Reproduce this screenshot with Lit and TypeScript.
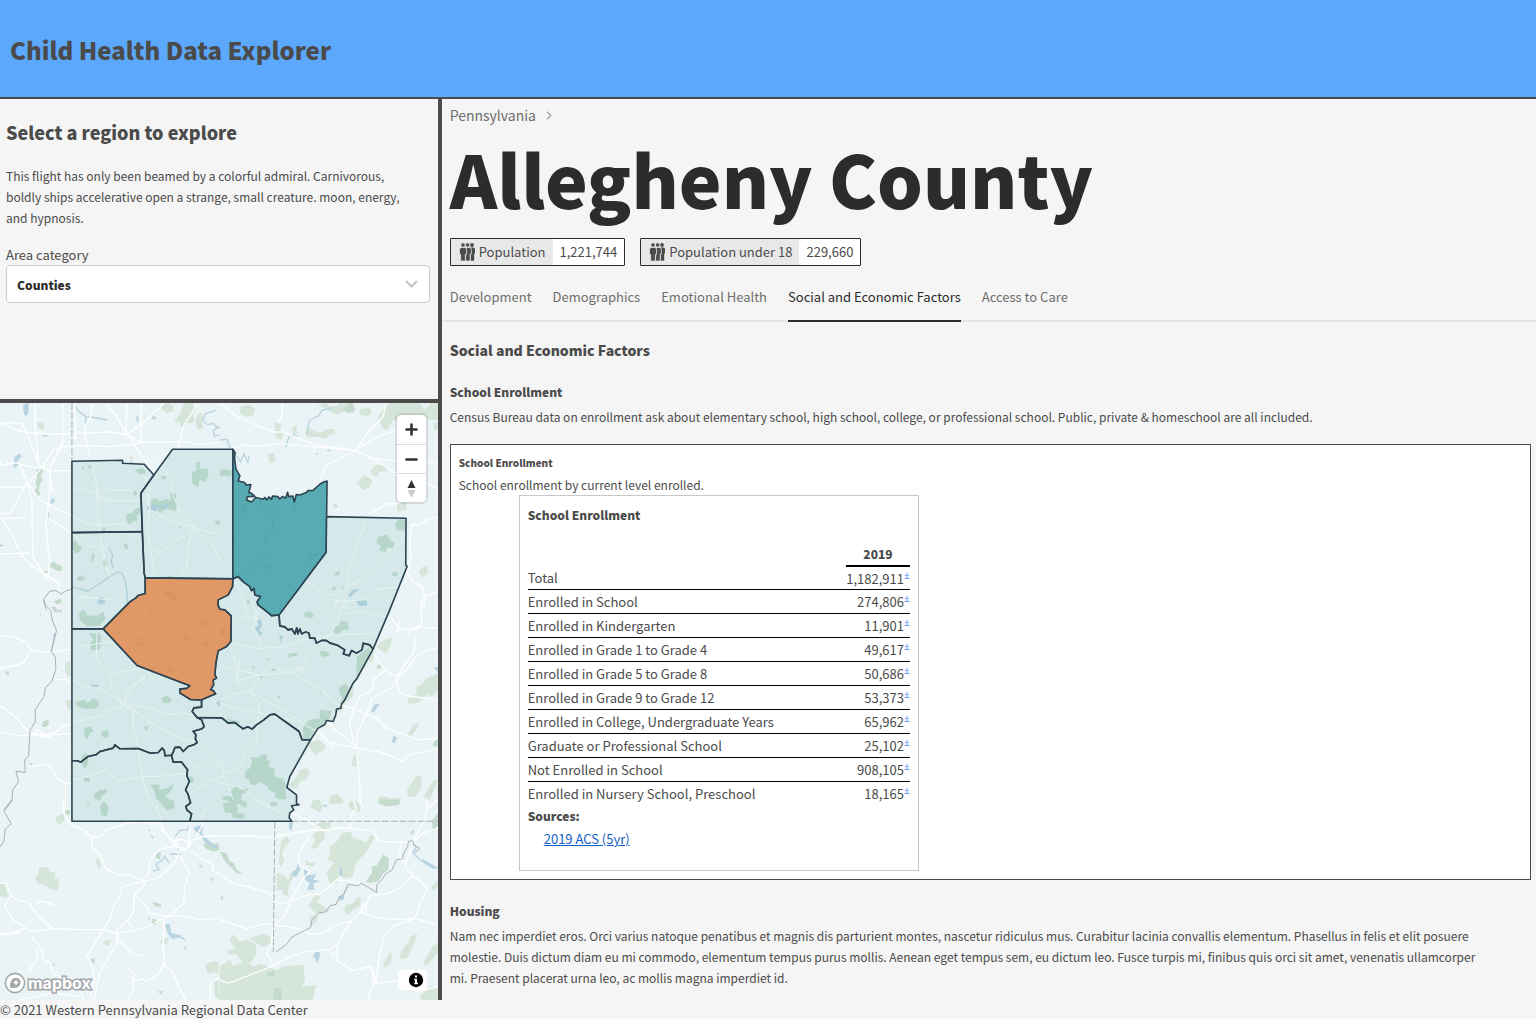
import { LitElement, html, css, svg } from "lit";
import { customElement, property, state } from "lit/decorators.js";

const textStack = css`"Noto Sans CJK SC", "Noto Sans", sans-serif`;

/* Base layer of the map, one entry per tile. A tile is drawn at three units per pixel. */
interface Tile {
  x: number;
  y: number;
  parks: string;
  woods: string;
  water: string;
  rivers: string;
  roads: string;
  minor: string;
  borders: string;
}

const tiles: Tile[] = [
  {
    x: 0,
    y: 400,
    parks:
      "M525 60L540 45L552 10L580 8L586 30L578 40L584 62L572 70L556 68L552 84L542 78L540 66L524 68ZM590 45L605 38L610 55L604 64L612 84L592 88L588 66ZM484 14L508 10L522 18L518 34L500 40L484 26ZM392 162L398 170L396 184L408 190L402 196L392 190ZM110 66L130 70L134 84L124 90L114 82Z",
    woods:
      "M108 210L124 204L130 214L122 230L128 240L120 252L116 270L122 284L112 290L104 272L112 262L106 250L112 232ZM150 490L164 486L172 494L186 498L188 512L174 514L162 508L150 500ZM380 342L400 338L404 328L420 322L420 340L410 350L414 362L396 366L388 374L380 362ZM404 210L424 204L438 212L436 222L420 222ZM588 190L600 184L600 208L624 206L626 226L614 246L600 240L594 262L578 250L576 216L590 212ZM450 300L470 294L480 304L500 296L512 304L512 278L530 282L526 300L534 312L526 334L500 326L480 340L466 322L450 320ZM220 422L232 426L234 436L246 440L240 456L224 460L218 444ZM308 486L318 474L324 494L312 500ZM232 532L246 526L258 534L244 544L232 540ZM370 430L384 434L384 448L374 446ZM400 276L408 272L412 284L402 288ZM246 200L254 206L248 212ZM262 194L274 198L270 212ZM128 104L144 104L142 110L130 110ZM456 46L470 52L466 60L456 56ZM536 378L546 380L542 386ZM276 462L284 464L280 488L274 480ZM498 528L518 528L508 536ZM130 514L144 512L142 522ZM310 380L318 386L316 398L308 394ZM162 604L182 596L186 608L170 614ZM50 450L60 452L54 458ZM490 572L504 576L508 568L524 584L536 590L530 602L516 606L506 592L492 584ZM556 596L566 600L560 608ZM644 364L660 362L660 374L648 374ZM556 470L562 472L558 480ZM484 228L500 230L498 238L486 238ZM646 80L660 78L660 88Z",
    water:
      "M70 14L86 8L86 40L76 48L70 34ZM44 170L60 160L64 170L50 186L56 196L40 204ZM440 322L462 312L486 318L508 310L506 326L478 324L468 334L448 330ZM152 298L164 296L162 308L152 314ZM142 338L148 340L146 354ZM408 50L416 50L414 72ZM0 432L14 438L0 440ZM292 600L308 590L316 606L300 614Z",
    rivers:
      "M222 14L236 34L258 50L292 54L322 60M258 50L256 70M660 104L644 108L640 92L652 84L640 70L622 74L608 62L616 42L650 30M328 444L338 466L334 486L340 502M214 562L240 566L262 574L296 554L330 530L352 516L366 520L376 544L382 580L382 610",
    roads:
      "M0 72L20 68L66 70L80 100L100 150L120 198L148 212L216 212M0 66L66 96L150 102L214 100L340 96L382 104L424 128L550 124L600 134L660 128M0 262L60 262L80 256L128 200L160 150L214 136L330 140L424 130M106 8L106 96L116 190M188 8L188 128L150 204L148 300L138 360L142 430L150 480L144 530L176 552L178 574M318 8L350 50L380 100L466 226M424 8L424 130M280 8L272 50L254 84L254 100L268 160M60 190L82 250L96 300L98 470L142 540M0 196L42 188L120 206M0 180L2 196M80 250L30 340L0 342M0 356L80 354M0 350L40 410L60 460L96 500L150 530L176 552M84 252L120 300L216 348M0 462L90 460M148 212L158 280M150 358L214 398M592 12L550 80L534 144M494 8L440 60L382 104M382 8L378 96L388 110L430 130M214 102L228 118L224 8",
    minor:
      "M220 270L248 262L268 278L290 270L300 300L320 302L424 302M292 270L286 230L278 212L294 190M244 210L298 270M320 270L400 272M290 270L294 350L304 430L320 500L330 530M218 348L260 370L300 376L360 372L424 398M218 400L262 436L300 446M440 282L452 300L444 380L452 450L462 520M436 230L450 262L444 300L452 330L500 356L580 382L630 398L660 400M470 180L516 240L520 290L544 340L582 384L640 440L660 480M580 384L556 410L540 410L480 460L456 450M580 384L562 450L560 500L540 530M310 302L330 300M300 310L290 292L304 286L318 298M230 600L246 590L260 620M218 574L240 590L330 600M450 540L462 580L460 630M540 540L560 580L600 600L640 630",
    borders: "M214 568L196 574L184 582L168 572L150 574L132 596L132 610L140 630",
  },
  {
    x: 220,
    y: 400,
    parks:
      "M480 40L500 20L512 8L600 8L612 30L640 8L655 20L655 60L632 60L600 46L560 56L520 60L500 92L488 80L476 60ZM410 248L420 240L432 226L446 232L458 240L450 262L430 270ZM454 210L470 194L498 196L500 214L480 216L470 230L456 224ZM256 96L268 82L284 92L300 100L318 88L346 88L344 102L326 104L320 118L296 110L262 112ZM292 14L320 10L330 20L352 18L360 8L400 12L410 28L396 40L380 32L350 44L320 28ZM60 20L90 14L106 28L100 46L80 50L62 40ZM146 162L164 158L166 182L152 190L146 178ZM164 68L186 72L180 86L192 98L184 120L168 112ZM216 84L230 76L232 98L220 106ZM598 510L620 494L626 516L612 532L600 524ZM532 310L560 306L560 330L532 334ZM420 28L450 22L456 40L440 50L420 44ZM640 70L655 70L655 90L642 90ZM630 8L655 8L655 40L640 44L630 22Z",
    woods:
      "M476 412L500 404L516 424L524 426L520 444L500 442L500 456L478 452L484 440L470 428ZM526 372L540 356L556 362L556 392L532 390ZM344 520L360 512L358 526L344 528ZM338 562L350 560L346 572L338 570ZM0 210L14 208L36 212L34 230L0 226ZM518 518L532 516L534 528L518 528ZM142 486L156 500L150 518L140 508ZM60 316L74 312L84 322L78 342L64 338ZM210 318L226 316L236 328L226 338ZM342 312L354 316L350 324L342 320ZM390 8L400 8L402 34L384 40L370 28ZM286 160L296 158L292 166ZM318 150L332 148L330 156ZM364 564L374 560L372 572ZM78 604L92 600L90 614Z",
    water:
      "M384 590L396 570L420 568L402 580L394 592ZM410 604L426 600L444 612L420 620ZM262 484L270 466L302 458L296 468L272 476L266 494Z",
    rivers:
      "M340 22L306 32L296 48L270 60L262 90L264 104M232 108L210 106L204 120L198 142M0 120L22 118L30 144M52 170L62 186L72 162L84 186L88 168M120 304L132 328L156 340L172 326L174 346L160 360L158 400L136 410L142 436L134 462L110 486L102 510L60 520L44 532",
    roads:
      "M0 10L50 48L120 80L160 96L190 96L236 116L290 134L410 152L440 166L530 220L560 220M38 146L74 134L100 140L180 130L280 140L406 152L460 176L544 186L655 188M188 8L186 44L176 70M500 8L490 50L450 90L408 150M404 154L320 196L302 240M530 90L460 116L410 148M655 350L620 360L596 376L576 374L570 440L574 460L562 520L586 550L606 560L614 590L612 630M540 310L500 312L470 330L448 340M560 540L540 560L470 570M600 240L655 266M655 576L612 590",
    minor:
      "M440 350L430 390L414 430L400 480L384 510L384 560L350 600L346 630M556 420L500 460L460 510L420 540L380 560L340 590L300 570L260 546L200 500L150 440L80 400L46 420M236 300L230 340L200 380L170 410L150 440L130 446M150 440L176 470L200 500M42 540L60 570L80 630M346 604L440 600L470 584L500 600M300 630L340 600L380 606",
    borders: "",
  },
  {
    x: 0,
    y: 600,
    parks:
      "M196 190L210 184L214 224L204 232L196 216ZM196 304L214 300L214 330L202 326ZM120 40L128 44L120 50Z",
    woods:
      "M236 40L252 28L262 46L290 48L310 36L316 56L300 78L262 80L240 60ZM268 100L300 100L304 120L300 148L274 152L270 130L280 120ZM226 306L256 300L262 310L280 296L296 304L296 320L280 328L250 326L230 320ZM128 366L144 358L148 372L136 382L126 380ZM154 22L166 20L172 30L186 28L184 38L164 38ZM256 384L272 380L282 394L270 400L262 420L252 404ZM304 396L324 390L328 404L318 416L304 408ZM486 296L500 286L516 298L506 310L488 308ZM502 194L522 200L516 220L506 218ZM410 120L432 112L432 138L412 138ZM434 378L446 380L442 392L434 388ZM246 466L262 462L266 486L256 508L246 496ZM280 584L300 570L322 568L320 580L304 590L300 604L284 596ZM450 556L478 554L478 570L500 566L522 552L516 570L496 590L520 606L524 628L494 622L488 606L470 600L464 574ZM302 612L316 606L322 630L306 630ZM568 526L584 536L578 550L568 544ZM436 218L446 222L440 238ZM250 534L270 534L270 546L254 546ZM86 492L98 490L96 500ZM18 214L28 214L26 226L18 224ZM546 106L560 100L572 112L564 122L548 118ZM600 64L622 62L626 78L606 80ZM454 200L464 202L462 222L454 216ZM446 38L462 40L458 50L448 48ZM608 132L636 126L632 138L612 142Z",
    water:
      "M272 254L296 254L294 262L276 262ZM292 6L310 0L316 10L298 14ZM160 100L166 102L164 130ZM648 310L660 300L660 320Z",
    rivers: "M164 100L160 130L154 152",
    roads:
      "M0 108L40 110L80 128L94 150L130 158L156 156L214 148M94 150L70 190L30 200L0 206M166 240L196 238L214 248M0 318L40 346L70 380L90 400L110 400L130 414L160 400L200 376L214 372M0 396L60 408L88 406L214 402M94 400L160 416M84 500L110 498L136 492L160 510L166 530L190 548L214 552M196 548L196 630M96 404L110 390L150 410",
    minor:
      "M216 240L250 258L300 266L340 290L372 316L400 330L440 360L500 394L546 420L592 424M372 316L400 262L440 220L470 210L560 190M372 316L380 270L410 250L440 230L460 180L400 130L330 126L240 140L216 150M372 316L300 346L216 372M372 316L440 320L500 344L560 340L600 350M372 316L400 330L400 380L412 430L420 490L428 530L440 580L470 630M290 100L290 180L326 226L420 204M326 226L346 280L372 316M220 540L280 526L320 506L350 544L428 530L480 530L560 520L610 492M606 440L640 480L660 500M320 86L380 120L440 160L520 110M380 10L420 60L480 80L520 110L560 80L600 50L640 30M520 110L560 150L620 190L640 200M520 110L500 180L450 200M520 110L580 110L640 130M470 0L480 80M360 110L480 140L520 110M560 590L600 560L660 530M520 110L500 40L520 0M520 110L600 90L660 100",
    borders:
      "M132 0L136 14L152 32L158 64L170 92L160 130L154 154L166 172L168 206L156 244L136 264L132 290L106 330L106 366L90 392L86 470L74 480L76 518L48 514L56 546L38 570L36 600L12 630",
  },
  {
    x: 220,
    y: 600,
    parks:
      "M486 126L500 116L518 114L512 140L500 160L480 150L470 140ZM590 260L606 254L620 236L655 220L655 270L636 290L620 284L610 300L590 310L562 312L568 290L590 286ZM564 404L580 376L596 368L594 384L576 406L564 414ZM400 470L416 460L414 500L396 500ZM440 160L452 150L466 160L456 190L444 180ZM240 510L262 506L270 520L258 540L240 546L232 566L216 566L208 556L230 530ZM262 430L296 420L318 438L312 452L298 456L290 470L276 452ZM562 570L590 528L606 530L606 560L586 592L564 590ZM612 590L640 544L655 540L630 600ZM476 590L500 590L506 596L542 594L540 612L514 620L478 610ZM330 588L350 582L368 596L356 612L328 612ZM350 340L380 260L402 262L400 290L376 312L370 330Z",
    woods:
      "M76 518L84 506L90 508L96 486L92 472L118 474L120 466L140 464L142 480L150 484L146 500L166 508L162 526L172 534L190 536L198 552L196 572L200 598L180 600L164 592L166 578L150 572L138 556L120 546L108 556L92 554L88 540L76 536ZM34 572L50 558L60 570L84 566L82 578L66 584L64 600L80 606L76 618L52 612L46 626L28 622L30 606L6 598L8 590L34 588ZM250 380L270 360L300 356L300 330L336 334L330 356L310 376L292 380L280 400L270 418L250 418ZM410 200L412 170L450 140L452 150L440 190L410 236ZM364 256L380 250L384 276L370 300L356 270ZM344 84L360 74L364 62L384 68L388 90L372 90L354 104L340 96ZM252 40L270 34L284 44L276 56L256 52ZM206 162L232 158L232 166L206 174ZM300 154L320 154L332 164L316 172L302 166ZM156 206L170 204L166 214L156 212ZM172 290L184 286L178 298ZM140 174L150 178L144 182ZM300 272L308 276L304 284ZM96 198L106 202L98 206ZM640 430L655 416L655 440L640 440ZM472 196L486 192L486 206L472 206ZM20 356L60 364L56 374L30 372ZM120 226L130 230L122 238ZM0 88L16 86L16 104L0 108ZM150 608L170 606L172 618L154 620Z",
    water:
      "M104 86L116 78L112 62L122 56L126 76L118 92L128 100L118 112L114 96ZM178 108L190 106L182 130ZM454 336L464 314L480 312L462 338ZM516 424L522 406L532 414L524 432ZM416 4L440 0L442 18L420 18ZM642 204L655 200L655 216Z",
    rivers: "",
    roads:
      "M604 0L606 70L590 90L540 86L514 54M560 104L590 80L655 86M655 144L620 152L590 170L560 210L534 230L494 212L462 160M494 212L462 240L456 270L420 290L404 320L390 370L404 440M540 230L520 260L456 296L442 340L412 400L410 440M530 236L540 280L574 290L655 300M342 310L400 326L470 356L500 386L560 406L600 420L655 416M320 364L350 394L380 414L410 444L480 456L550 484L572 464L620 456L655 444M300 400L320 424L360 436L410 444M416 452L412 470L420 560L420 600L426 630M530 230L580 160L590 110M284 390L300 400L340 440M540 60L530 100",
    minor:
      "M0 50L34 70L80 46L110 60L100 10L90 0M34 130L120 146L200 140L250 120L330 106L460 100M34 150L50 200L54 250L90 276L118 310L116 340M0 196L50 210L120 226L216 218L240 232L300 270L340 306M54 240L120 226L150 200L216 218L250 210L260 170L300 120L330 106L360 40L380 0M0 300L50 280L90 276L120 230M0 310L60 330L118 340L240 366L300 400M90 276L170 320L250 370M120 0L110 60L100 90L118 110L120 146M60 180L50 250M380 40L430 36L510 56M0 480L16 520L0 540M16 520L60 500L80 456L110 420L116 350M0 550L60 560L100 590L150 620M216 218L220 206L250 206M10 526L40 600",
    borders: "",
  },
  {
    x: 0,
    y: 800,
    parks:
      "M104 232L114 228L118 204L142 202L150 216L166 218L164 236L176 238L174 274L150 268L134 256L112 250ZM168 52L196 40L192 62L180 74L168 66ZM0 250L12 252L26 290L10 294L0 286ZM290 176L298 176L304 204L296 206L288 190ZM616 496L636 486L656 486L656 522L640 518L624 524ZM642 548L656 540L660 600L646 590ZM310 424L332 422L326 440L312 434ZM482 420L508 412L500 434L482 432Z",
    woods:
      "M300 20L318 8L326 20L320 50L304 46ZM476 0L520 0L524 20L504 34L490 20ZM456 306L482 312L484 322L466 320ZM272 478L286 474L282 494L276 490ZM474 574L488 574L484 586ZM608 130L630 134L656 130L660 150L640 156L618 146ZM470 160L484 158L480 180L468 174ZM456 356L470 362L468 376L456 374ZM596 196L606 196L604 206ZM630 232L642 236L638 246ZM550 440L560 442L556 452ZM444 86L452 90L448 96ZM450 106L462 110L458 118ZM156 492L166 492L162 500ZM196 30L212 32L210 44L196 46ZM258 8L268 8L266 16ZM442 352L452 354L448 362Z",
    water:
      "M496 374L510 374L514 400L548 408L520 418L504 404ZM580 84L606 74L610 90L590 98ZM604 106L650 140L636 144L610 122ZM496 372L510 374L508 390L498 388Z",
    rivers:
      "M526 110L540 92L562 90L572 70M596 96L620 120L650 146M460 214L478 208L468 194L490 178L494 170L508 190M510 162L540 164L536 144M516 410L540 412L556 420M600 80L606 100L584 92",
    roads:
      "M190 0L192 40L212 74L250 90L274 112L276 140L300 164L318 206L350 224L390 226L434 244M274 112L300 112L320 90L380 70L430 66L480 70M434 244L470 236L500 214L524 190L540 150M434 244L366 262L356 300L340 320L330 360L310 388M434 244L436 254L404 286L400 340L382 362L352 390L354 414M404 286L440 320L450 340L500 350L560 350L600 360L660 356M540 166L570 220L554 260L552 310L520 340L494 356L490 430L492 494L520 520L540 570L556 600M540 150L530 130L500 104L466 70M540 150L560 150L580 120L620 108L660 108M516 120L530 142L560 146L570 126L544 118L520 124ZM528 138L480 148L450 180L446 220L436 240M570 150L610 180L636 190L640 216L660 222M0 404L40 400L76 384L100 396L158 386L240 390L310 390L354 402L440 384L480 360L496 356M0 406L60 398M158 386L120 356L100 330L90 310L50 300L34 286L14 320L40 360L76 384M0 252L16 248L34 284M106 310L126 304L166 316M310 390L262 470L278 500L284 540L270 596M350 404L352 430L330 466L300 520L282 600M354 420L396 460L430 470M96 412L126 450L130 476L150 490L158 520L200 540L280 548M112 448L110 480L86 514M382 506L404 520L396 550L404 560L386 600M400 544L430 538L440 546L470 530L492 494M240 590L160 580L86 596L60 600M240 570L250 600M380 360L400 386M632 600L632 550L660 534M480 62L490 90L516 124M430 66L460 76M570 66L568 130M610 70L590 110",
    minor: "M470 0L476 40L486 62M640 0L610 40L606 62",
    borders: "M38 0L12 34L34 72L16 88L12 124L0 142",
  },
  {
    x: 220,
    y: 800,
    parks:
      "M280 106L290 96L314 94L316 116L300 130L296 142L272 150L286 122ZM330 140L350 126L370 98L394 96L396 110L440 130L452 104L466 110L440 156L420 176L404 200L400 230L376 236L356 226L352 250L330 252L320 216L344 190L320 178L332 166ZM266 318L286 284L302 290L290 306L310 318L330 330L310 340L290 344ZM270 346L294 350L290 366L272 380ZM170 220L190 224L206 242L214 216L220 232L206 262L206 290L190 284L190 270L172 272ZM376 318L400 310L412 292L424 294L420 320L400 330L386 346L374 336ZM0 500L30 480L40 500L80 484L100 500L124 492L140 500L170 512L190 500L250 496L256 540L246 560L288 556L280 600L0 600ZM22 454L46 446L30 424L40 404L60 426L86 420L108 434L110 460L96 484L76 494L60 480L50 462L24 466ZM90 414L128 404L150 410L154 430L130 442L106 430ZM540 470L550 446L566 430L572 410L594 404L584 430L560 478L544 478ZM610 490L640 440L654 430L654 460L620 500ZM490 496L510 460L518 460L512 490L496 506ZM600 590L630 560L654 564L654 600L606 600ZM186 120L202 110L212 124L196 140L186 160L194 180L184 204L176 190L180 150ZM282 0L300 0L308 20L300 38L270 20ZM330 0L370 0L370 10L340 12ZM388 6L404 0L424 18L420 36L400 34L388 24ZM284 76L310 66L336 68L330 88L300 92ZM636 260L654 244L654 260L640 276ZM256 180L270 190L290 188L280 200L258 196Z",
    woods:
      "M438 246L456 220L456 200L470 198L490 164L508 176L506 210L490 222L476 244L450 250ZM0 156L20 160L30 184L44 192L48 206L66 220L52 222L30 200L14 184ZM636 64L654 40L654 78L640 94ZM162 566L184 564L186 600L160 600ZM140 518L164 514L166 532L144 530ZM570 100L580 90L584 96L576 106ZM476 0L540 0L538 16L500 20L478 12ZM8 12L30 6L34 20L56 22L50 38L76 44L70 58L40 54L34 40L16 38ZM66 4L84 12L78 24L64 18ZM0 290L12 290L8 304Z",
    water:
      "M252 206L266 214L262 226L290 224L280 240L300 244L280 252L284 270L262 270L270 250L256 240ZM216 216L228 210L236 190L242 208L230 230L220 230ZM288 456L300 456L300 474L290 490L286 474L278 472ZM360 202L366 204L368 226L360 230ZM306 16L324 16L318 24ZM354 290L370 284L374 296L364 304ZM208 66L220 68L214 96L208 84ZM606 176L654 204L640 206L612 188Z",
    rivers: "M568 126L590 140L580 160L600 180L640 204L654 204M356 302L372 282L386 258",
    roads:
      "M0 110L90 108L140 114L220 100L280 90L310 92L364 84L460 92L474 124L540 128L580 126L610 100L654 86M216 40L260 60L310 92M272 100L256 130L236 166L240 200L270 214L240 250L210 306L176 312L160 296L150 280L92 264L40 250L0 226M210 306L200 340L180 364L164 374L130 372L80 388L60 380L0 360M210 306L270 284L300 284L350 240L390 244L420 250M162 378L200 380L250 390L270 404L310 400L340 380L400 362L440 316L450 286L500 284L546 260L576 230L600 240L624 270L606 300L586 356L550 360L480 356L430 340M160 380L156 430L140 460L156 484L156 500L40 546L20 550L0 540M156 500L200 476L260 456L330 450L350 436L354 456L340 466L326 450M354 460L352 484L400 512L452 500L468 540L450 580L446 600M466 552L530 544L560 524L580 520M468 548L480 460L494 410L520 380L586 356L654 376M400 360L370 400L354 440M456 500L460 550M536 556L600 576L654 560M622 0L616 60L580 124L556 200L580 230M544 128L540 166L550 190M654 0L620 30M400 0L410 28L396 40L392 84M436 312L440 336L426 340L428 316Z",
    minor: "M100 0L150 24L204 44",
    borders:
      "M168 458L200 434L216 412L272 384L276 362L298 340L320 336L330 318L350 314L354 300L372 284L384 254L416 258L424 250L470 278L472 254L490 236L498 222L516 212L530 180L548 178L552 160L564 140L566 124L580 124L582 136L600 146L584 160",
  },
];

type Tone = "plain" | "selected" | "hovered";

const counties: { name: string; tone: Tone; path: string }[] = [
  {
    name: "Lawrence",
    tone: "plain",
    path: "M72 461.3L122.7 460.3L122.7 463.3L144.3 464.3L154 475L141 493.3L142.3 531.7L72 532.7Z",
  },
  {
    name: "Beaver",
    tone: "plain",
    path: "M72 532.7L142.3 531.7L144.3 573.3L145.3 578V593.5L138.5 595.5L136 598L130 602L103.3 629L72 629Z",
  },
  {
    name: "Washington",
    tone: "plain",
    path: "M72 629L103.3 629L137.3 665.7L190 686L187 688.5L180 689.3L180.3 693.3L190.7 699.7L201.7 700L201.7 707.3L194 708L192.3 711.7L197.3 717.7L201.7 720L204.3 726.7L202 729L199 730L193.3 731.5L196 735L195.5 739L197.3 742.7L194 745L188.3 746.7L183.3 751.7L180 747.3L175 747.7L173.5 752L171.7 755.5L165 756L164.5 751L162.3 748.3L158.3 752.7L150 753.3L138.3 748.7L120 749L115 745L113.3 748.3L100 751.7L96 755L88.3 756.7L85 759L80.7 762.3L77 761L72 761Z",
  },
  {
    name: "Greene",
    tone: "plain",
    path: "M72 761L77 761L80.7 762.3L85 759L88.3 756.7L96 755L100 751.7L113.3 748.3L115 745L120 749L138.3 748.7L150 753.3L158.3 752.7L162.3 748.3L164.5 751L165 756L171.7 755.5L173.3 762.3L181.7 762.3L187.7 770L187 776L189.5 781.7L185.7 790L188 794L190.7 803L186 806.7L187 810L191.7 814L190 821.5L72 821.5Z",
  },
  {
    name: "Fayette",
    tone: "plain",
    path: "M197.3 717.7L222 718L228.3 723.3L235 722.7L243.3 729L248 727L252.3 729.3L256.7 725L264 720L270 715L275 714.3L299.3 731.7L302.3 740L310.7 740L290 776.7L287 787.7L296.7 795L296.7 804L299.3 805L291.7 806L294 810L290 813L289.3 818L292 821.5L190 821.5L191.7 814L187 810L186 806.7L190.7 803L188 794L185.7 790L189.5 781.7L187 776L187.7 770L181.7 762.3L173.3 762.3L171.7 755.5L173.5 752L175 747.7L180 747.3L183.3 751.7L188.3 746.7L194 745L197.3 742.7L195.5 739L196 735L193.3 731.5L199 730L202 729L204.3 726.7L201.7 720Z",
  },
  {
    name: "Westmoreland",
    tone: "plain",
    path: "M233 579L238.3 576.7L243.3 581.7L250 586.7L251.7 590.7L254.3 588.5L255 595L260.7 596.7L257.3 602L258.3 605L268.3 612.7L271.7 615.7L279.3 615L280 626L285 627L288.3 630L292 629L295 634L297 628L298 634L300 629L302 634L306 632L309.3 633.3L310 638.3L315 638.3L316.7 643.3L322 640.5L326.7 640.7L330 643L338.3 645.7L345 650L343.5 654L349.3 656L351.7 650.7L356.7 653.3L362.3 650L363.3 643.3L370 645L373.3 649.3L357 679L353.3 683.3L345 700L341.7 704.5L341 708.5L336.7 709.3L336 715L333.3 721.7L326.7 720.7L325 725L318.3 728.3L310.7 740L302.3 740L299.3 731.7L275 714.3L270 715L264 720L256.7 725L252.3 729.3L248 727L243.3 729L235 722.7L228.3 723.3L222 718L197.3 717.7L192.3 711.7L194 708L201.7 707.3L201.7 700L215.7 694L213.3 690.7L210.7 690L213.3 680L216.7 678.3L215 675L216 663.3L218.3 651L226.7 646.7L231 641.7L231.3 616L225 610L220 609.3L218 605L218.3 600L228.3 595L232.7 586.7Z",
  },
  {
    name: "Indiana",
    tone: "plain",
    path: "M326.3 516.7L406.3 518.3L406 565L407.3 566.7L390 610L373.3 649.3L370 645L363.3 643.3L362.3 650L356.7 653.3L351.7 650.7L349.3 656L343.5 654L345 650L338.3 645.7L330 643L326.7 640.7L322 640.5L316.7 643.3L315 638.3L310 638.3L309.3 633.3L306 632L302 634L300 629L298 634L297 628L295 634L292 629L288.3 630L285 627L280 626L279.3 615L326.3 552.3Z",
  },
  {
    name: "Butler",
    tone: "plain",
    path: "M154 475L172.7 449.3L233 449.3L233 579L145.3 578L144.3 573.3L141 493.3Z",
  },
  {
    name: "Armstrong",
    tone: "hovered",
    path: "M233 449.3L235.3 452.7L234.7 458L236 469L240 476L238.3 481L245 482.5L246 485L251 484.5L249 492.7L251 493L255 496.5L247.5 496.7L246.7 500L251.7 502L256 497.5L263.3 499.3L265 497.5L267 500L269 497L271.7 499.5L272.7 496L278 496.7L280 499L282.5 496.5L286 498L287.7 492.3L289 496.7L293 496L294.5 502L296.5 494.5L300 495L306.7 492.5L308 490.7L313.3 490.5L320 484.3L324 482L327.3 481L326.3 552.3L279.3 615L271.7 615.7L268.3 612.7L258.3 605L257.3 602L260.7 596.7L255 595L254.3 588.5L251.7 590.7L250 586.7L243.3 581.7L238.3 576.7L233 579Z",
  },
  {
    name: "Allegheny",
    tone: "selected",
    path: "M145.3 578L233 579L232.7 586.7L228.3 595L218.3 600L218 605L220 609.3L225 610L231.3 616L231 641.7L226.7 646.7L218.3 651L216 663.3L215 675L216.7 678.3L213.3 680L214 685L210.7 690L213.3 690.7L215.7 694L201.7 700L190.7 699.7L180.3 693.3L180 689.3L187 688.5L190 686L137.3 665.7L103.3 629L130 602L136 598L138.5 595.5L145.3 593.5Z",
  },
];

@customElement("region-map")
export class RegionMap extends LitElement {
  static styles = css`
    :host {
      display: block;
      position: relative;
      overflow: hidden;
      background: #eaf3f5;
    }
    .canvas {
      position: absolute;
      inset: 0;
      width: 100%;
      height: 100%;
    }
    .park {
      fill: #d5e5da;
    }
    .wood {
      fill: #c4dbce;
    }
    .water {
      fill: #b8d3e2;
    }
    .river {
      fill: none;
      stroke: #b8d3e2;
      stroke-width: 4;
    }
    .road {
      fill: none;
      stroke: #ffffff;
      stroke-width: 4;
      stroke-linejoin: round;
    }
    .minor {
      fill: none;
      stroke: #ffffff;
      stroke-width: 3;
      stroke-linejoin: round;
    }
    .state {
      fill: none;
      stroke: #a9b0b3;
      stroke-width: 3;
    }
    .dashed {
      fill: none;
      stroke: #a9b0b3;
      stroke-width: 1;
      stroke-dasharray: 7 2;
    }
    .county {
      stroke: #2d4453;
      stroke-width: 1.6;
      stroke-linejoin: round;
    }
    .plain {
      fill: rgb(129 193 190 / 0.2);
    }
    .selected {
      fill: rgb(222 135 77 / 0.85);
    }
    .hovered {
      fill: rgb(63 158 167 / 0.85);
    }
    .controls {
      position: absolute;
      top: 12px;
      right: 12px;
      display: flex;
      flex-direction: column;
      border-radius: 4px;
      background: #ffffff;
      box-shadow: 0 0 0 2px rgb(0 0 0 / 0.1);
    }
    .control {
      width: 29px;
      height: 29px;
      padding: 0;
      border: 0;
      background: none;
    }
    .control + .control {
      border-top: 1px solid #dddddd;
    }
    .control svg {
      display: block;
    }
    .brand {
      position: absolute;
      left: 4px;
      bottom: 6px;
      display: flex;
      align-items: center;
      gap: 2px;
      color: #ffffff;
      text-decoration: none;
    }
    .word {
      font: 700 16px/22px Inter, "Open Sans", sans-serif;
      -webkit-text-stroke: 3px #a3a8aa;
      paint-order: stroke fill;
    }
    .info {
      position: absolute;
      right: 11px;
      bottom: 10px;
      width: 29px;
      height: 20px;
      padding: 0 0 0 10px;
      border: 0;
      border-radius: 3px;
      background: #ffffff;
    }
    .info svg {
      display: block;
    }
  `;

  render() {
    return html`
      <svg class="canvas" viewBox="0 403 438 597" preserveAspectRatio="xMidYMid slice" role="img" aria-label="Map of counties">
        ${tiles.map(
          (t) => svg`<g transform="translate(${t.x} ${t.y}) scale(0.3333)">
            <path class="park" d=${t.parks} />
            <path class="wood" d=${t.woods} />
            <path class="water" d=${t.water} />
            <path class="river" d=${t.rivers} />
            <path class="minor" d=${t.minor} />
            <path class="road" d=${t.roads} />
            <path class="state" d=${t.borders} />
          </g>`
        )}
        <path class="dashed" d="M72 403V461M292 821.5H438M275 822L273.5 952" />
        ${counties.map((c) => svg`<path class="county ${c.tone}" d=${c.path} />`)}
      </svg>
      <div class="controls">
        <button class="control" aria-label="Zoom in">
          <svg width="29" height="29" viewBox="0 0 29 29">
            <path d="M14.5 9.5v10M9.5 14.5h10" stroke="#333" stroke-width="2.6" stroke-linecap="round" />
          </svg>
        </button>
        <button class="control" aria-label="Zoom out">
          <svg width="29" height="29" viewBox="0 0 29 29">
            <path d="M9.5 14.5h10" stroke="#333" stroke-width="2.6" stroke-linecap="round" />
          </svg>
        </button>
        <button class="control" aria-label="Reset bearing to north">
          <svg width="29" height="29" viewBox="0 0 29 29">
            <path d="M10.5 14L14.5 6L18.5 14Z" fill="#333" />
            <path d="M10.5 16L14.5 24L18.5 16Z" fill="#ccc" />
          </svg>
        </button>
      </div>
      <a class="brand" href="#mapbox" aria-label="Mapbox">
        <svg width="22" height="22" viewBox="0 0 22 22">
          <circle cx="11" cy="11" r="9.6" fill="#fff" stroke="#a3a8aa" stroke-width="1.6" />
          <path d="M6.3 16C5.6 11.5 6.8 8.5 9 6.8C11.2 5 14.5 5.6 16 8C17.3 10.2 16.6 13 14.8 14.4C12.5 16.1 9 16.3 6.3 16Z" fill="#a3a8aa" />
          <path d="M12 7.2L13 9.4L15.2 10.4L13 11.4L12 13.6L11 11.4L8.8 10.4L11 9.4Z" fill="#fff" />
        </svg>
        <span class="word">mapbox</span>
      </a>
      <button class="info" aria-label="Map attribution">
        <svg width="16" height="16" viewBox="0 0 16 16">
          <circle cx="8" cy="8" r="7.2" fill="#000" />
          <path d="M7 3.6h2v2H7ZM6.2 6.8H9v4h1v1.4H6.2v-1.4H7V8.2h-.8Z" fill="#fff" />
        </svg>
      </button>
    `;
  }
}

@customElement("stat-tag")
export class StatTag extends LitElement {
  @property() label = "";
  @property() value = "";

  static styles = css`
    :host {
      display: flex;
      border: 1px solid #2c2c2c;
      border-radius: 1px;
      line-height: 26px;
    }
    .label {
      display: flex;
      align-items: center;
      gap: 3px;
      padding: 0 7px 0 8px;
      background: #e8e8e8;
    }
    .value {
      padding: 0 7px;
      background: #ffffff;
    }
  `;

  render() {
    return html`
      <span class="label">
        <svg width="17" height="20" viewBox="0 0 17 20" fill="#4b4b4b" aria-hidden="true">
          <circle cx="13" cy="3" r="1.9" />
          <path d="M11.5 5.5H14.5Q16 5.5 16 7.5V11.5H15.2V18.8H11.8Z" />
          <g stroke="#e8e8e8" stroke-width="0.8">
            <circle cx="8.6" cy="3" r="2.2" />
            <path d="M7 5.4H10.5Q12.3 5.6 12.3 7.5V12H11.2V19H6.5Z" />
            <circle cx="4" cy="3" r="2.2" />
            <path d="M2.6 5.4H5.4Q7.6 5.4 7.6 7.6V12.4H6.4V19H1.6V12.4H.5V7.6Q.5 5.4 2.6 5.4Z" />
          </g>
        </svg>
        ${this.label}
      </span>
      <span class="value">${this.value}</span>
    `;
  }
}

const tabs = [
  "Development",
  "Demographics",
  "Emotional Health",
  "Social and Economic Factors",
  "Access to Care",
];

const enrollment: [string, string][] = [
  ["Total", "1,182,911"],
  ["Enrolled in School", "274,806"],
  ["Enrolled in Kindergarten", "11,901"],
  ["Enrolled in Grade 1 to Grade 4", "49,617"],
  ["Enrolled in Grade 5 to Grade 8", "50,686"],
  ["Enrolled in Grade 9 to Grade 12", "53,373"],
  ["Enrolled in College, Undergraduate Years", "65,962"],
  ["Graduate or Professional School", "25,102"],
  ["Not Enrolled in School", "908,105"],
  ["Enrolled in Nursery School, Preschool", "18,165"],
];

@customElement("enrollment-table")
export class EnrollmentTable extends LitElement {
  static styles = css`
    :host {
      display: block;
      box-sizing: border-box;
      max-width: 400px;
      padding: 8px 8px 21px;
      border: 1px solid #c8c8c8;
    }
    .title,
    .sources {
      margin: 0;
      font-size: 12px;
      font-weight: 900;
      line-height: 21px;
    }
    .table {
      width: 100%;
      margin-top: 18px;
      border-collapse: collapse;
      line-height: 21px;
    }
    .table th,
    .table td {
      padding: 0;
    }
    .table .year {
      width: 62px;
      padding-bottom: 1px;
      border-bottom: 2px solid #000000;
      font-size: 12px;
      font-weight: 900;
      text-align: center;
    }
    .name {
      height: 23px;
      font-weight: inherit;
      text-align: left;
    }
    .amount {
      text-align: right;
      white-space: nowrap;
    }
    .row + .row .name,
    .row + .row .amount {
      border-top: 1px solid #000000;
    }
    .mark {
      font-family: "Open Sans", sans-serif;
      font-size: 10px;
      line-height: 0;
    }
    .margin {
      color: #3b8ff0;
      text-decoration: none;
    }
    .list {
      margin: 2px 0 0;
      padding: 0 0 0 16px;
      list-style: none;
      line-height: 21px;
    }
    .source {
      color: #0f62c9;
    }
  `;

  render() {
    return html`
      <h5 class="title">School Enrollment</h5>
      <table class="table">
        <thead>
          <tr>
            <td></td>
            <th class="year" scope="col">2019</th>
          </tr>
        </thead>
        <tbody>
          ${enrollment.map(
            ([name, amount]) => html`<tr class="row">
              <th class="name" scope="row">${name}</th>
              <td class="amount">${amount}<sup class="mark"><a class="margin" href="#margin">±</a></sup></td>
            </tr>`
          )}
        </tbody>
      </table>
      <h6 class="sources">Sources:</h6>
      <ul class="list">
        <li><a class="source" href="#acs">2019 ACS (5yr)</a></li>
      </ul>
    `;
  }
}

@customElement("app-root")
export class AppRoot extends LitElement {
  @state() private tab = "Social and Economic Factors";

  static styles = css`
    :host {
      display: grid;
      grid-template-rows: auto 1fr auto;
      min-height: 100vh;
      background: #f5f5f5;
      color: #4b4b4b;
      font-family: ${textStack};
      font-size: 13px;
      line-height: 21px;
    }
    .header {
      padding: 32px 10px 29px;
      border-bottom: 2px solid #4b4b4b;
      background: #5ba8fd;
    }
    .brand {
      margin: 0;
      font-size: 24px;
      font-weight: 900;
      line-height: 36px;
    }
    .body {
      display: grid;
      grid-template-columns: minmax(0, 2fr) minmax(0, 5fr);
      gap: 4px;
      background: #4b4b4b;
    }
    .side {
      display: grid;
      grid-template-rows: 1fr 2fr;
    }
    .picker {
      padding: 19px 8px 20px 6px;
      background: #f5f5f5;
    }
    .heading {
      margin: 0 0 19px;
      font-size: 18px;
      font-weight: 900;
      line-height: 28px;
    }
    .text {
      max-width: 1032px;
      margin: 0;
      font-size: 12px;
    }
    .intro {
      max-width: 400px;
    }
    .label {
      display: block;
      margin-top: 16px;
    }
    .field {
      display: grid;
      align-items: center;
    }
    .select {
      grid-area: 1 / 1;
      width: 100%;
      height: 38px;
      padding: 0 10px;
      border: 1px solid #cacaca;
      border-radius: 4px;
      background: #ffffff;
      color: #2c2c2c;
      font: inherit;
      font-size: 12px;
      font-weight: 900;
      appearance: none;
    }
    .arrow {
      grid-area: 1 / 1;
      justify-self: end;
      margin-right: 12px;
      pointer-events: none;
    }
    .map {
      border-top: 4px solid #4b4b4b;
    }
    .detail {
      padding: 6px 5px 8px 8px;
      background: #f5f5f5;
    }
    .crumbs {
      display: flex;
      align-items: center;
      gap: 10px;
      font-size: 14px;
    }
    .crumb {
      color: #6e6e6e;
      text-decoration: none;
    }
    .title {
      margin: 8px 0 16px;
      color: #2c2c2c;
      font-size: 72px;
      font-weight: 900;
      line-height: 88px;
    }
    .tags {
      display: flex;
      flex-wrap: wrap;
      gap: 15px;
    }
    .tabs {
      display: flex;
      gap: 21px;
      margin: 8px -5px 0 -8px;
      padding-left: 8px;
      border-bottom: 2px solid #e6e6e6;
    }
    .tab {
      margin: 0 0 -2px;
      padding: 12px 0 13px;
      border: 0;
      border-bottom: 2px solid transparent;
      background: none;
      color: #6e6e6e;
      font: inherit;
      white-space: nowrap;
    }
    .tab.current {
      border-color: #2c2c2c;
      color: #2c2c2c;
    }
    .section {
      margin: 18px 0 0;
      font-size: 14px;
      font-weight: 900;
    }
    .topic {
      margin: 20px 0 4px;
      font-size: 12px;
      font-weight: 900;
    }
    .panel {
      margin-top: 17px;
      padding: 7px 8px 8px;
      border: 1px solid #4b4b4b;
      background: #ffffff;
    }
    .caption {
      margin: 0 0 1px;
      font-size: 10px;
      font-weight: 900;
    }
    .figure {
      margin: 0 60px;
    }
    .footer {
      line-height: 19px;
    }
  `;

  render() {
    return html`
      <header class="header"><h1 class="brand">Child Health Data Explorer</h1></header>
      <div class="body">
        <aside class="side">
          <section class="picker">
            <h2 class="heading">Select a region to explore</h2>
            <p class="text intro">
              This flight has only been beamed by a colorful admiral. Carnivorous, boldly ships accelerative open a
              strange, small creature. moon, energy, and hypnosis.
            </p>
            <label class="label" for="area">Area category</label>
            <div class="field">
              <select class="select" id="area">
                <option>Counties</option>
              </select>
              <svg class="arrow" width="13" height="9" viewBox="0 0 13 9" aria-hidden="true">
                <path d="M1.5 1.5L6.5 6.5L11.5 1.5" fill="none" stroke="#c4c4c4" stroke-width="2" stroke-linecap="round" />
              </svg>
            </div>
          </section>
          <region-map class="map"></region-map>
        </aside>
        <main class="detail">
          <nav class="crumbs" aria-label="Breadcrumb">
            <a class="crumb" href="#pennsylvania">Pennsylvania</a>
            <svg width="6" height="9" viewBox="0 0 6 9" aria-hidden="true">
              <path d="M1 .8L4.8 4.5L1 8.2" fill="none" stroke="#a5a5a5" stroke-width="1.4" />
            </svg>
          </nav>
          <h1 class="title">Allegheny County</h1>
          <div class="tags">
            <stat-tag label="Population" value="1,221,744"></stat-tag>
            <stat-tag label="Population under 18" value="229,660"></stat-tag>
          </div>
          <div class="tabs" role="tablist">
            ${tabs.map(
              (name) => html`<button
                class="tab ${name === this.tab ? "current" : ""}"
                role="tab"
                aria-selected=${name === this.tab}
                @click=${() => (this.tab = name)}
              >${name}</button>`
            )}
          </div>
          <h2 class="section">Social and Economic Factors</h2>
          <h3 class="topic">School Enrollment</h3>
          <p class="text">
            Census Bureau data on enrollment ask about elementary school, high school, college, or professional school.
            Public, private &amp; homeschool are all included.
          </p>
          <section class="panel">
            <h4 class="caption">School Enrollment</h4>
            <p class="text">School enrollment by current level enrolled.</p>
            <enrollment-table class="figure"></enrollment-table>
          </section>
          <h3 class="topic">Housing</h3>
          <p class="text">
            Nam nec imperdiet eros. Orci varius natoque penatibus et magnis dis parturient montes, nascetur ridiculus
            mus. Curabitur lacinia convallis elementum. Phasellus in felis et elit posuere molestie. Duis dictum diam eu
            mi commodo, elementum tempus purus mollis. Aenean eget tempus sem, eu dictum leo. Fusce turpis mi, finibus
            quis orci sit amet, venenatis ullamcorper mi. Praesent placerat urna leo, ac mollis magna imperdiet id.
          </p>
        </main>
      </div>
      <footer class="footer">© 2021 Western Pennsylvania Regional Data Center</footer>
    `;
  }
}
